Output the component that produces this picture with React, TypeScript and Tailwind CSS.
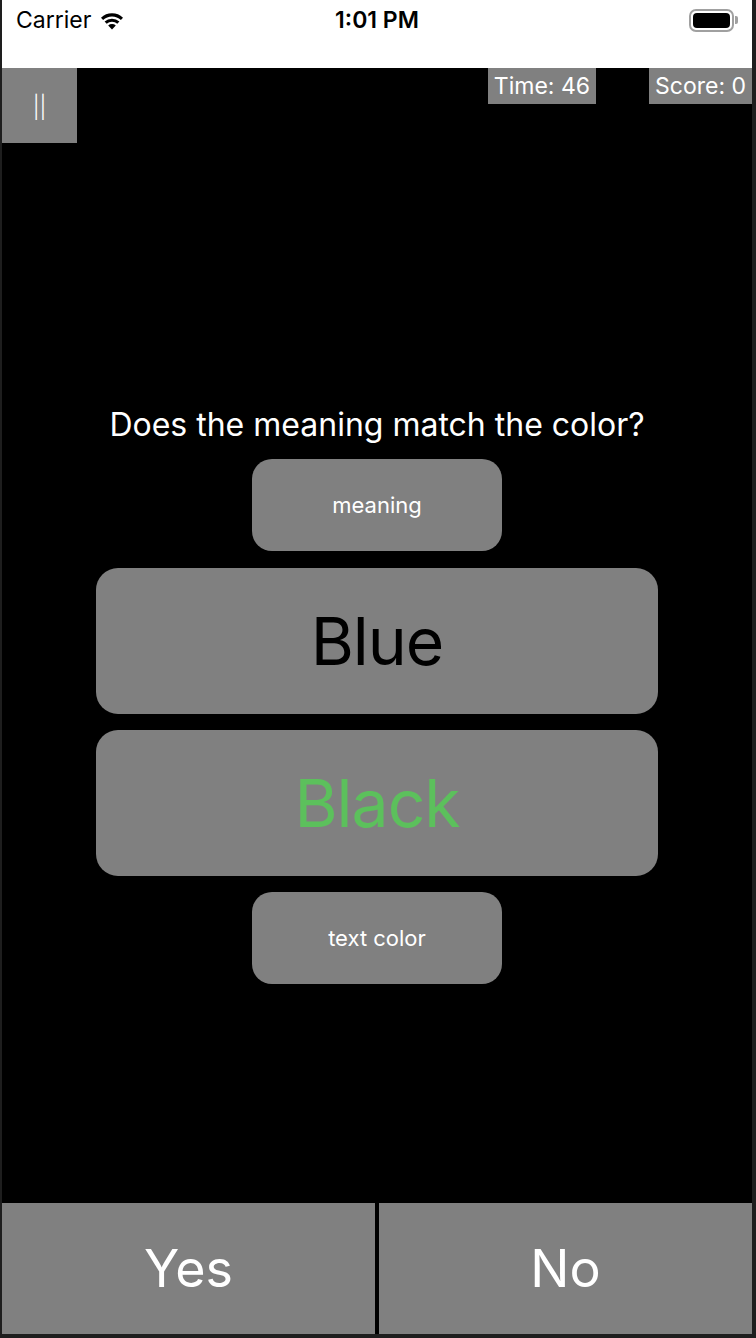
import { Fragment } from "react";

function Wifi() {
  return (
    <svg width="26" height="20" viewBox="0 0 26 20" className="ml-2">
      <path d="M13 19.5 L9.2 15.4 A5.6 5.6 0 0 1 16.8 15.4 Z" fill="black" />
      <path d="M5.6 11.6 A10.8 10.8 0 0 1 20.4 11.6 L18.3 13.8 A7.8 7.8 0 0 0 7.7 13.8 Z" fill="black" />
      <path d="M2 7.8 A15.8 15.8 0 0 1 24 7.8 L21.9 10 A12.8 12.8 0 0 0 4.1 10 Z" fill="black" />
    </svg>
  );
}

function Battery() {
  return (
    <div className="flex items-center">
      <div className="w-[45px] h-[23px] rounded-[7px] border-[2px] border-[#a0a0a0] p-[2px]">
        <div className="w-full h-full rounded-[4px] bg-black" />
      </div>
      <div className="w-[3px] h-[8px] rounded-r-[2px] bg-[#a0a0a0] ml-[1px]" />
    </div>
  );
}

function Pill({ label }: { label: string }) {
  return (
    <div className="w-[250px] h-[92px] rounded-[20px] bg-[#808080] flex items-center justify-center text-white text-[22px]">
      {label}
    </div>
  );
}

function WordCard({ word, color }: { word: string; color: string }) {
  return (
    <div className="w-[562px] h-[146px] rounded-[22px] bg-[#808080] flex items-center justify-center">
      <span className={`text-[66px] leading-none tracking-[-1px] ${color}`}>{word}</span>
    </div>
  );
}

export default function App() {
  return (
    <div
      className="w-[756px] h-[1338px] bg-[#1e1e1e] pl-[2px] pr-[4px] pb-[4px]"
      style={{ fontFamily: "Inter, 'Liberation Sans', sans-serif" }}
    >
      <div className="h-full flex flex-col bg-black">
        {/* status bar */}
        <div className="h-[68px] bg-white relative">
          <div className="flex items-center h-[40px] px-[14px]">
            <span className="text-[23px] text-black">Carrier</span>
            <Wifi />
            <div className="flex-1" />
            <Battery />
          </div>
          <div className="absolute left-0 right-0 top-0 h-[40px] flex items-center justify-center text-[23px] font-semibold text-black">
            1:01 PM
          </div>
        </div>

        {/* top bar */}
        <div className="flex items-start">
          <div className="w-[75px] h-[75px] bg-[#808080] flex items-center justify-center text-white text-[22px] font-light pt-[4px]">
            ||
          </div>
          <div className="flex-1" />
          <div className="h-[36px] px-[6px] bg-[#808080] text-white text-[23px] flex items-center">Time: 46</div>
          <div className="w-[53px]" />
          <div className="h-[36px] px-[6px] bg-[#808080] text-white text-[23px] flex items-center">Score: 0</div>
        </div>

        {/* game */}
        <div className="flex-1 flex flex-col items-center pt-[262px]">
          <div className="text-white text-[32px] leading-[40px] mb-[14px]">Does the meaning match the color?</div>
          <Pill label="meaning" />
          <div className="h-[17px]" />
          <WordCard word="Blue" color="text-black" />
          <div className="h-[16px]" />
          <WordCard word="Black" color="text-[#5cc05c]" />
          <div className="h-[16px]" />
          <Pill label="text color" />
        </div>

        {/* answers */}
        <div className="h-[131px] flex gap-[4px]">
          {["Yes", "No"].map((t) => (
            <Fragment key={t}>
              <div className="flex-1 bg-[#808080] flex items-center justify-center text-white text-[52px]">{t}</div>
            </Fragment>
          ))}
        </div>
      </div>
    </div>
  );
}
